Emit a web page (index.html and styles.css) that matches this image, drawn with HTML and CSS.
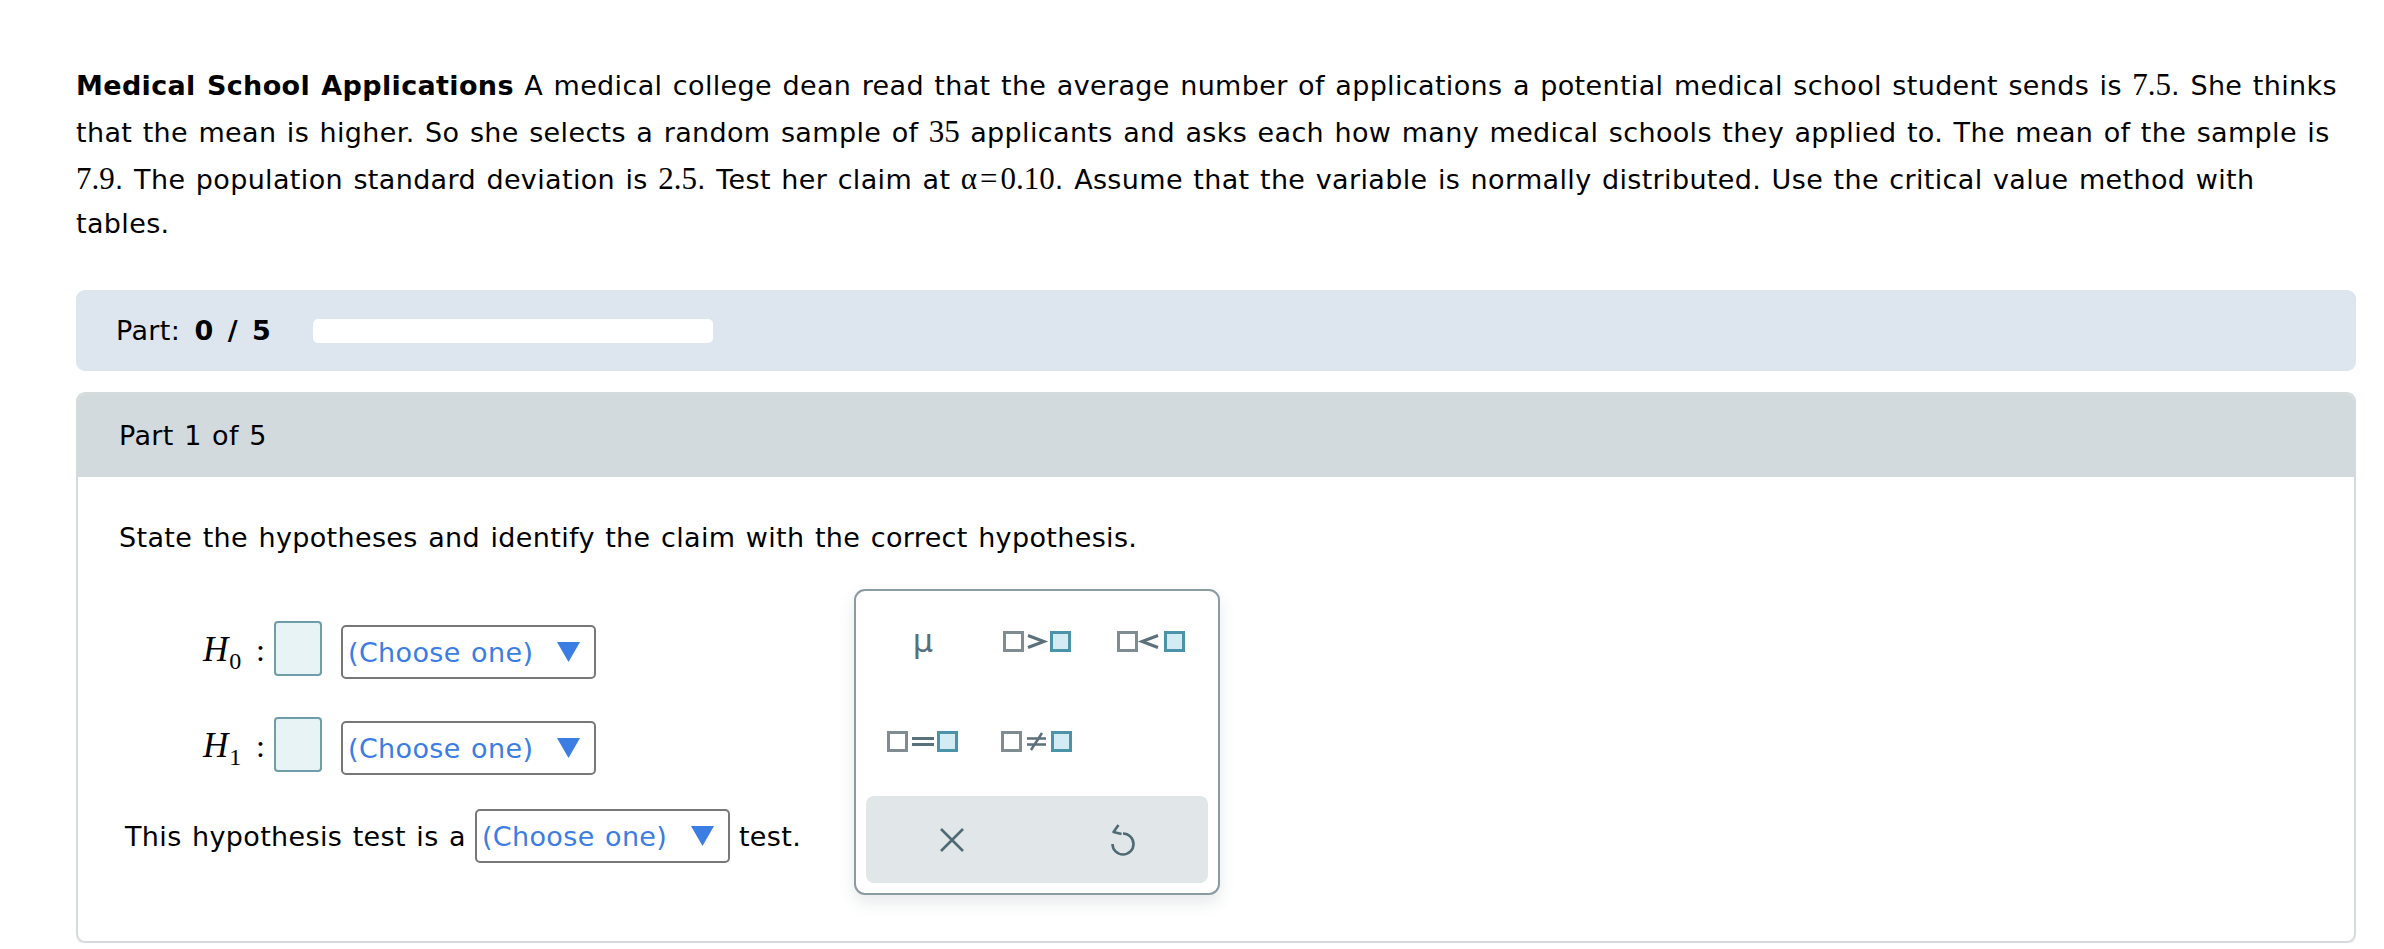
FILE: index.html
```html
<!DOCTYPE html>
<html lang="en">
<head>
<meta charset="utf-8">
<title>Medical School Applications</title>
<link rel="stylesheet" href="styles.css">
</head>
<body>
<main class="page">
  <p class="problem"><b>Medical School Applications</b> A medical college dean read that the average number of applications a potential medical school student sends is <span class="m">7.5</span>. She thinks that the mean is higher. So she selects a random sample of <span class="m">35</span> applicants and asks each how many medical schools they applied to. The mean of the sample is <span class="m">7.9</span>. The population standard deviation is <span class="m">2.5</span>. Test her claim at <span class="m">α<span class="eq">=</span>0.10</span>. Assume that the variable is normally distributed. Use the critical value method with tables.</p>

  <div class="progress">
    <span class="progress-label">Part: <b>0 / 5</b></span>
    <div class="track"></div>
  </div>

  <section class="card">
    <header class="card-head">Part 1 of 5</header>
    <div class="card-body">
      <p class="prompt">State the hypotheses and identify the claim with the correct hypothesis.</p>
      <div class="answer">
        <div class="fields">
          <div class="hrow">
            <span class="hlabel"><span class="mi">H</span><span class="sub">0</span></span>
            <span class="colon">:</span>
            <span class="slot"></span>
            <div class="select"><span>(Choose one)</span><svg class="caret" width="23" height="20" viewBox="0 0 23 20"><polygon points="0,0 23,0 11.5,20" fill="#3b7de2"/></svg></div>
          </div>
          <div class="hrow">
            <span class="hlabel"><span class="mi">H</span><span class="sub">1</span></span>
            <span class="colon">:</span>
            <span class="slot"></span>
            <div class="select"><span>(Choose one)</span><svg class="caret" width="23" height="20" viewBox="0 0 23 20"><polygon points="0,0 23,0 11.5,20" fill="#3b7de2"/></svg></div>
          </div>
          <div class="trow">
            <span>This hypothesis test is a</span>
            <div class="select"><span>(Choose one)</span><svg class="caret" width="23" height="20" viewBox="0 0 23 20"><polygon points="0,0 23,0 11.5,20" fill="#3b7de2"/></svg></div>
            <span>test.</span>
          </div>
        </div>

        <div class="palette">
          <div class="keys">
            <div class="key"><span class="mu">μ</span></div>
            <div class="key">
              <svg width="68" height="21" viewBox="0 0 68 21"><rect x="1.5" y="1.5" width="18" height="18" fill="none" stroke="#7f8d93" stroke-width="3"/><path d="M25 4.5 L41 10.5 L25 16.5" fill="none" stroke="#5b707a" stroke-width="3"/><rect x="48.5" y="1.5" width="18" height="18" fill="#d3ebf2" stroke="#4a93a9" stroke-width="3"/></svg>
            </div>
            <div class="key">
              <svg width="68" height="21" viewBox="0 0 68 21"><rect x="1.5" y="1.5" width="18" height="18" fill="none" stroke="#7f8d93" stroke-width="3"/><path d="M41 4.5 L25 10.5 L41 16.5" fill="none" stroke="#5b707a" stroke-width="3"/><rect x="48.5" y="1.5" width="18" height="18" fill="#d3ebf2" stroke="#4a93a9" stroke-width="3"/></svg>
            </div>
            <div class="key">
              <svg width="72" height="21" viewBox="0 0 72 21"><rect x="1.5" y="1.5" width="18" height="18" fill="none" stroke="#7f8d93" stroke-width="3"/><path d="M25 7.5 H47 M25 13.5 H47" fill="none" stroke="#5b707a" stroke-width="3"/><rect x="51.5" y="1.5" width="18" height="18" fill="#d3ebf2" stroke="#4a93a9" stroke-width="3"/></svg>
            </div>
            <div class="key">
              <svg width="72" height="21" viewBox="0 0 72 21"><rect x="1.5" y="1.5" width="18" height="18" fill="none" stroke="#7f8d93" stroke-width="3"/><path d="M26 7.5 H45 M26 13.5 H45 M41 2 L30 19" fill="none" stroke="#5b707a" stroke-width="2.5"/><rect x="51.5" y="1.5" width="18" height="18" fill="#d3ebf2" stroke="#4a93a9" stroke-width="3"/></svg>
            </div>
            <div class="key empty"></div>
          </div>
          <div class="actions">
            <div class="action">
              <svg width="26" height="26" viewBox="0 0 26 26"><path d="M2 2 L24 24 M24 2 L2 24" stroke="#4f6a75" stroke-width="2.6" fill="none"/></svg>
            </div>
            <div class="action">
              <svg width="28" height="34" viewBox="0 0 28 34"><path d="M14 10.5 A10.5 10.5 0 1 1 3.5 21" fill="none" stroke="#4f6a75" stroke-width="2.6"/><path d="M9.5 2 L4.5 9 L12.5 11" fill="none" stroke="#4f6a75" stroke-width="2.6" stroke-linejoin="round"/></svg>
            </div>
          </div>
        </div>
      </div>
    </div>
  </section>
</main>
</body>
</html>
```

FILE: styles.css
```css
html, body {
  margin: 0;
  padding: 0;
  background: #ffffff;
}

body {
  font-family: "DejaVu Sans", Verdana, sans-serif;
  font-size: 27px;
  color: #000000;
  letter-spacing: 0.35px;
  word-spacing: 1.5px;
}

.page {
  padding: 61px 28px 0 76px;
}

.problem {
  margin: 0;
  line-height: 43px;
}

.problem b {
  font-weight: bold;
}

.m {
  font-family: "Liberation Serif", "Times New Roman", serif;
  font-size: 31px;
  line-height: 47px;
  letter-spacing: 0;
}

.eq {
  margin: 0 3px;
}

.progress {
  margin-top: 45px;
  height: 81px;
  background: #dde6ee;
  border-radius: 9px;
  display: flex;
  align-items: center;
  padding-left: 40px;
}

.progress-label {
  width: 197px;
  flex: none;
}

.progress-label b {
  letter-spacing: 1px;
  word-spacing: 3px;
  margin-left: 4px;
}

.track {
  width: 400px;
  height: 24px;
  background: #ffffff;
  border-radius: 5px;
}

.card {
  margin-top: 21px;
  border: 2px solid #d5dadd;
  border-radius: 9px;
  box-shadow: 0 2px 1px rgba(0, 0, 0, 0.06);
  overflow: hidden;
}

.card-head {
  height: 83px;
  background: #d3dadd;
  display: flex;
  align-items: center;
  padding-left: 41px;
}

.card-body {
  padding: 39px 41px 46px;
}

.prompt {
  margin: 0;
  line-height: 43px;
}

.answer {
  margin-top: 30px;
  display: flex;
  align-items: flex-start;
}

.fields {
  width: 735px;
  flex: none;
  padding-top: 31px;
}

.hrow {
  height: 60px;
  display: flex;
  align-items: center;
  padding-left: 84px;
}

.hrow + .hrow {
  margin-top: 36px;
}

.hlabel {
  width: 53px;
  font-family: "Liberation Serif", "Times New Roman", serif;
  white-space: nowrap;
  letter-spacing: 0;
}

.mi {
  font-style: italic;
  font-size: 35px;
}

.sub {
  font-size: 24px;
  position: relative;
  top: 8px;
  margin-left: 1px;
}

.colon {
  font-family: "Liberation Serif", "Times New Roman", serif;
  font-size: 32px;
  width: 18px;
}

.slot {
  width: 44px;
  height: 51px;
  border: 2px solid #6c9da8;
  border-radius: 4px;
  background: #e7f3f5;
  margin-bottom: 4px;
  flex: none;
}

.select {
  height: 50px;
  width: 232px;
  margin-left: 19px;
  margin-top: 4px;
  border: 2px solid #787878;
  border-radius: 5px;
  display: flex;
  align-items: center;
  justify-content: space-between;
  padding: 0 14px 0 5px;
  box-sizing: content-box;
  color: #3b7de2;
  background: #ffffff;
}

.caret {
  display: block;
  flex: none;
}

.trow {
  margin-top: 30px;
  height: 60px;
  display: flex;
  align-items: center;
  padding-left: 6px;
}

.trow .select {
  margin: 0 9px 0 9px;
}

.palette {
  width: 366px;
  border: 2px solid #8a9ba3;
  border-radius: 11px;
  background: #ffffff;
  box-shadow: 0 8px 16px rgba(60, 80, 90, 0.12);
  padding: 0 10px 10px;
  box-sizing: border-box;
}

.keys {
  display: grid;
  grid-template-columns: repeat(3, 1fr);
  grid-auto-rows: 100px;
}

.key {
  display: flex;
  align-items: center;
  justify-content: center;
}

.key svg {
  display: block;
}

.mu {
  font-size: 32px;
  color: #56707a;
  line-height: 1;
}

.actions {
  margin-top: 5px;
  height: 87px;
  background: #e1e6e9;
  border-radius: 8px;
  display: grid;
  grid-template-columns: 1fr 1fr;
}

.action {
  display: flex;
  align-items: center;
  justify-content: center;
}

.action svg {
  display: block;
}
```
